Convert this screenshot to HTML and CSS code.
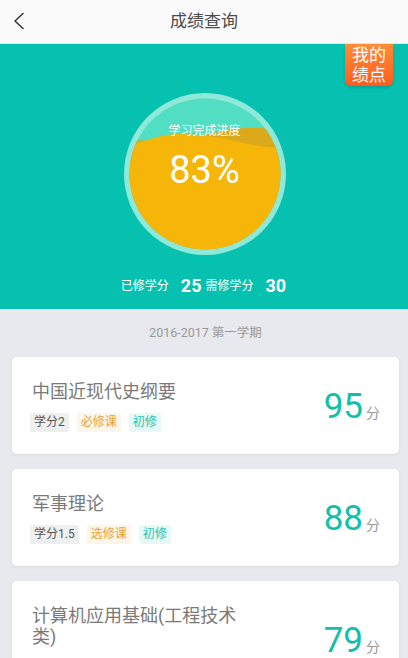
FILE: index.html
```html
<!DOCTYPE html>
<html lang="zh-CN">
<head>
<meta charset="utf-8">
<title>成绩查询</title>
<link rel="stylesheet" href="styles.css">
</head>
<body>
<header class="topbar">
  <svg class="back" width="12" height="18" viewBox="0 0 12 18"><polyline points="10,1.5 2,9 10,16.5" fill="none" stroke="#333" stroke-width="1.5" stroke-linecap="round" stroke-linejoin="round"/></svg>
  <h1 class="title">成绩查询</h1>
</header>

<section class="hero">
  <div class="badge">我的<br>绩点</div>
  <div class="gauge">
    <svg class="gauge-svg" width="162" height="162" viewBox="0 0 162 162">
      <defs>
        <clipPath id="inner"><circle cx="81" cy="81" r="75.5"/></clipPath>
      </defs>
      <circle cx="81" cy="81" r="81" fill="#8fe9d8"/>
      <circle cx="81" cy="81" r="75.5" fill="#52dec3"/>
      <g clip-path="url(#inner)">
        <path d="M0,45 C25,50 55,48 85,41 C105,36 125,33 145,36 C152,37 158,39 162,41 L162,162 L0,162 Z" fill="#dca81c"/>
        <path d="M0,54 C18,50 35,41 55,41 C78,41 100,45 120,50 C135,53 148,55 162,54 L162,162 L0,162 Z" fill="#f5b609"/>
      </g>
    </svg>
    <div class="gauge-label">学习完成进度</div>
    <div class="gauge-value">83%</div>
  </div>
  <div class="stats">
    <span class="stat-label">已修学分</span><span class="stat-num">25</span><span class="stat-label">需修学分</span><span class="stat-num">30</span>
  </div>
</section>

<main class="list">
  <div class="term">2016-2017 第一学期</div>

  <div class="card">
    <div class="info">
      <div class="course">中国近现代史纲要</div>
      <div class="tags">
        <span class="tag tag-credit">学分2</span>
        <span class="tag tag-type">必修课</span>
        <span class="tag tag-first">初修</span>
      </div>
    </div>
    <div class="score"><span class="score-num">95</span><span class="score-unit">分</span></div>
  </div>

  <div class="card">
    <div class="info">
      <div class="course">军事理论</div>
      <div class="tags">
        <span class="tag tag-credit">学分1.5</span>
        <span class="tag tag-type">选修课</span>
        <span class="tag tag-first">初修</span>
      </div>
    </div>
    <div class="score"><span class="score-num">88</span><span class="score-unit">分</span></div>
  </div>

  <div class="card">
    <div class="info">
      <div class="course">计算机应用基础(工程技术类)</div>
      <div class="tags">
        <span class="tag tag-credit">学分2.5</span>
        <span class="tag tag-type">必修课</span>
        <span class="tag tag-first">初修</span>
      </div>
    </div>
    <div class="score"><span class="score-num">79</span><span class="score-unit">分</span></div>
  </div>
</main>
</body>
</html>
```

FILE: styles.css
```css
* { box-sizing: border-box; }
html, body {
  margin: 0;
  padding: 0;
}
body {
  font-family: Roboto, "Noto Sans CJK SC", sans-serif;
  background: #e8e9ee;
  width: 408px;
  overflow-x: hidden;
}

.topbar {
  height: 44px;
  background: #fafafa;
  border-bottom: 1px solid #d6ebe7;
  display: flex;
  align-items: center;
  justify-content: center;
  position: relative;
}
.back {
  position: absolute;
  left: 13px;
  top: 12px;
}
.title {
  margin: 0;
  font-size: 17px;
  font-weight: 400;
  color: #4a4a4a;
  line-height: 20px;
  margin-top: -1px;
}

.hero {
  background: #06c1af;
  height: 265px;
  position: relative;
  display: flex;
  flex-direction: column;
  align-items: center;
  padding-top: 49px;
}
.badge {
  position: absolute;
  right: 15px;
  top: 0;
  width: 48px;
  height: 42px;
  padding: 1px 0 0 0;
  text-align: center;
  color: #fff;
  font-size: 17px;
  line-height: 20px;
  background: linear-gradient(#ff8d35, #ff5a1e);
  border-radius: 0 0 6px 6px;
  box-shadow: 0 2px 3px rgba(0, 0, 0, 0.15);
}
.gauge {
  width: 162px;
  height: 162px;
  position: relative;
  margin-left: 1px;
}
.gauge-svg {
  display: block;
}
.gauge-label {
  position: absolute;
  left: 0;
  right: 0;
  top: 29px;
  text-align: center;
  color: #fff;
  font-size: 12px;
  line-height: 18px;
}
.gauge-value {
  position: absolute;
  left: 0;
  right: 0;
  top: 54px;
  text-align: center;
  color: #fff;
  font-size: 38px;
  line-height: 46px;
}
.stats {
  margin-top: 19px;
  margin-left: 3px;
  display: flex;
  align-items: center;
  color: #fff;
  line-height: 24px;
}
.stat-label {
  font-size: 12px;
}
.stat-num {
  font-size: 18px;
  font-weight: 700;
  margin: 0 4px 0 12px;
}

.list {
  padding: 0 9px 20px 12px;
}
.term {
  height: 48px;
  line-height: 48px;
  text-align: center;
  font-size: 12.5px;
  color: #999;
}
.card {
  background: #fff;
  border-radius: 5px;
  box-shadow: 0 1px 3px rgba(0, 0, 0, 0.07);
  padding: 24px 19px 22px 20px;
  display: flex;
  align-items: center;
  justify-content: space-between;
  margin-bottom: 15px;
}
.course {
  font-size: 18px;
  line-height: 21px;
  color: #7a7a7a;
  max-width: 212px;
}
.tags {
  display: flex;
  gap: 8px;
  margin-top: 11px;
  margin-left: -2px;
}
.tag {
  font-size: 12px;
  line-height: 19px;
  height: 19px;
  padding: 0 4px;
  border-radius: 2px;
}
.tag-credit {
  background: #eef0f0;
  color: #555;
}
.tag-type {
  background: #fcf5ea;
  color: #e8a33a;
}
.tag-first {
  background: #e6f9f6;
  color: #26c5b0;
}
.score {
  display: flex;
  align-items: baseline;
}
.score-num {
  font-size: 35px;
  line-height: 40px;
  color: #12bfa9;
}
.score-unit {
  font-size: 14px;
  color: #999;
  margin-left: 3px;
}
```
